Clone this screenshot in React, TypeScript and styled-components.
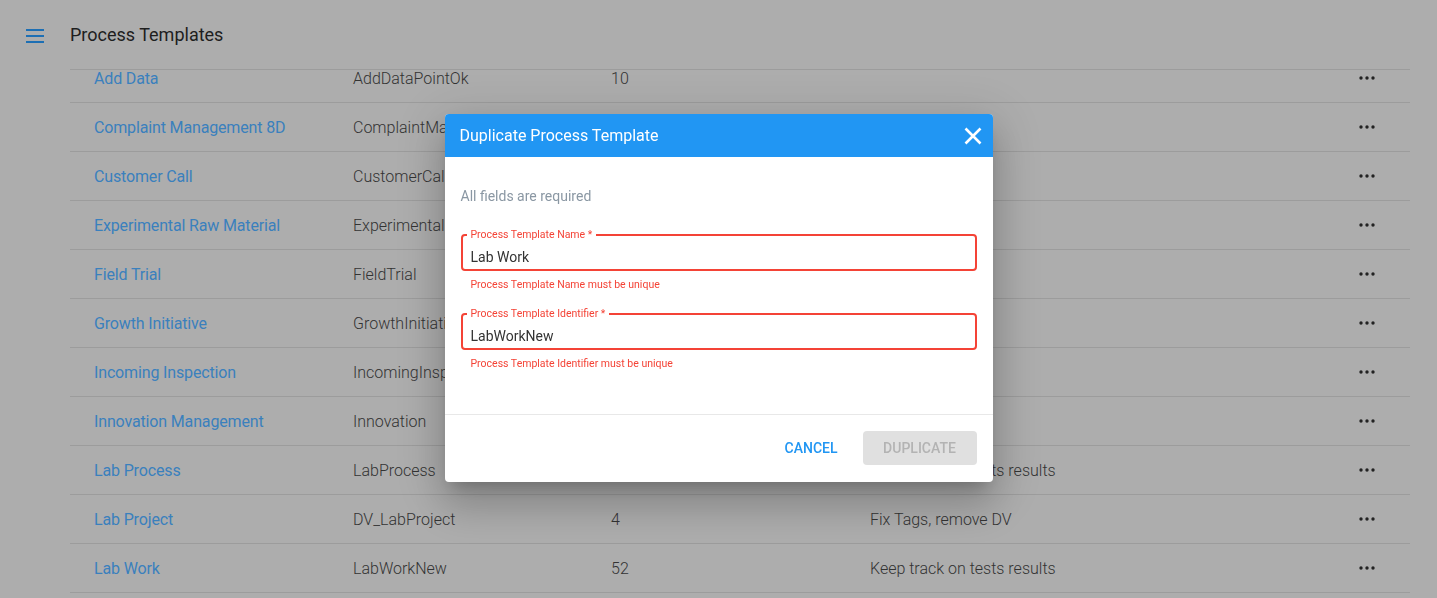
import React from "react";
import styled, { createGlobalStyle } from "styled-components";

const GlobalStyle = createGlobalStyle`
  html, body { margin: 0; padding: 0; height: 100%; overflow: hidden; }
  body { font-family: Roboto, "Noto Sans", Arial, sans-serif; background: #adadad; }
  * { box-sizing: border-box; }
`;

const Page = styled.div`
  height: 598px;
  display: flex;
  flex-direction: column;
  background: #adadad;
`;

const TopBar = styled.header`
  height: 69px;
  flex: none;
  display: flex;
  align-items: center;
  padding-left: 26px;
  gap: 26px;
`;

const MenuButton = styled.button`
  border: 0;
  background: none;
  padding: 0;
  width: 18px;
  height: 14px;
  display: flex;
  flex-direction: column;
  justify-content: space-between;
  margin-top: 2px;
  span {
    display: block;
    height: 2px;
    background: #1d6fb4;
  }
`;

const Title = styled.h1`
  margin: 0;
  font-size: 18px;
  font-weight: 400;
  color: #1e1e1e;
`;

const TableViewport = styled.div`
  flex: 1;
  margin: 0 27px 0 70px;
  overflow: hidden;
  border-top: 1px solid #9c9c9c;
`;

const Rows = styled.div`
  margin-top: -16px;
`;

const Row = styled.div`
  display: grid;
  grid-template-columns: 259px 258px 259px 1fr 87px;
  padding-left: 24px;
  height: 49px;
  align-items: center;
  border-bottom: 1px solid #9c9c9c;
  font-size: 16px;
  font-weight: 300;
  color: #333;
`;

const NameCell = styled.span`
  color: #3a80bd;
  font-weight: 400;
  letter-spacing: -0.15px;
`;

const Cell = styled.span`
  white-space: nowrap;
`;

const ActionCell = styled.span`
  display: flex;
  justify-content: center;
  svg { display: block; }
`;

const Backdrop = styled.div`
  position: fixed;
  inset: 0;
  display: flex;
  align-items: center;
  justify-content: center;
`;

const Dialog = styled.div`
  width: 548px;
  background: #fff;
  border-radius: 4px;
  overflow: hidden;
  margin-top: -2px;
  box-shadow: 0 11px 15px -7px rgba(0,0,0,0.2), 0 24px 38px 3px rgba(0,0,0,0.14), 0 9px 46px 8px rgba(0,0,0,0.12);
`;

const DialogHeader = styled.div`
  height: 43px;
  background: #2196f3;
  display: flex;
  align-items: center;
  justify-content: space-between;
  padding: 0 10px 0 15px;
`;

const DialogTitle = styled.h2`
  margin: 0;
  font-size: 16px;
  font-weight: 400;
  color: #fff;
`;

const CloseButton = styled.button`
  border: 0;
  background: none;
  padding: 0;
  width: 20px;
  height: 20px;
  display: flex;
  align-items: center;
  justify-content: center;
`;

const DialogBody = styled.div`
  padding: 29px 16px 43px;
`;

const Hint = styled.p`
  margin: 0 0 23px;
  font-size: 14px;
  line-height: 20px;
  color: #8a97a3;
`;

const Field = styled.div`
  & + & { margin-top: 16px; }
`;

const Outline = styled.fieldset`
  margin: 0;
  padding: 6px 8px 2px;
  border: 2px solid #f44336;
  border-radius: 4px;
  min-width: 0;
`;

const Legend = styled.legend`
  font-size: 10.5px;
  line-height: 12px;
  color: #f44336;
  padding: 0 4px;
  margin-left: -4px;
`;

const Value = styled.input`
  display: block;
  width: 100%;
  height: 20px;
  border: 0;
  padding: 0;
  outline: none;
  font-family: inherit;
  font-size: 14px;
  color: #333;
  background: transparent;
`;

const Helper = styled.div`
  margin-top: 7px;
  padding-left: 10px;
  font-size: 10.5px;
  line-height: 14px;
  color: #f44336;
`;

const DialogFooter = styled.div`
  border-top: 1px solid #e8e8e8;
  padding: 16px 16px 17px;
  display: flex;
  justify-content: flex-end;
  gap: 9px;
`;

const Button = styled.button<{ $variant: "text" | "disabled" }>`
  height: 34px;
  border: 0;
  border-radius: 4px;
  padding: 0 16px;
  font-family: inherit;
  font-size: 14px;
  font-weight: 500;
  letter-spacing: 0;
  background: ${(p) => (p.$variant === "disabled" ? "#e0e0e0" : "transparent")};
  color: ${(p) => (p.$variant === "disabled" ? "#b3b3b3" : "#2196f3")};
  width: ${(p) => (p.$variant === "disabled" ? "114px" : "auto")};
`;

const Dots = () => (
  <svg width="16" height="4" viewBox="0 0 16 4">
    <circle cx="2" cy="2" r="1.7" fill="#222" />
    <circle cx="8" cy="2" r="1.7" fill="#222" />
    <circle cx="14" cy="2" r="1.7" fill="#222" />
  </svg>
);

const rows = [
  ["Add Data", "AddDataPointOk", "10", ""],
  ["Complaint Management 8D", "ComplaintManagement8D", "", ""],
  ["Customer Call", "CustomerCall", "", ""],
  ["Experimental Raw Material", "ExperimentalRawMaterial", "", ""],
  ["Field Trial", "FieldTrial", "", ""],
  ["Growth Initiative", "GrowthInitiative", "", ""],
  ["Incoming Inspection", "IncomingInspection", "", ""],
  ["Innovation Management", "Innovation", "", ""],
  ["Lab Process", "LabProcess", "", "Keep track on tests results"],
  ["Lab Project", "DV_LabProject", "4", "Fix Tags, remove DV"],
  ["Lab Work", "LabWorkNew", "52", "Keep track on tests results"],
];

export default function App() {
  return (
    <>
      <GlobalStyle />
      <Page>
        <TopBar>
          <MenuButton aria-label="menu">
            <span />
            <span />
            <span />
          </MenuButton>
          <Title>Process Templates</Title>
        </TopBar>
        <TableViewport>
          <Rows>
            {rows.map(([name, id, count, desc]) => (
              <Row key={name}>
                <NameCell>{name}</NameCell>
                <Cell>{id}</Cell>
                <Cell>{count}</Cell>
                <Cell>{desc}</Cell>
                <ActionCell>
                  <Dots />
                </ActionCell>
              </Row>
            ))}
          </Rows>
        </TableViewport>
      </Page>
      <Backdrop>
        <Dialog>
          <DialogHeader>
            <DialogTitle>Duplicate Process Template</DialogTitle>
            <CloseButton aria-label="close">
              <svg width="18" height="18" viewBox="0 0 18 18">
                <path d="M1.5 1.5 L16.5 16.5 M16.5 1.5 L1.5 16.5" stroke="#fff" strokeWidth="2.6" strokeLinecap="butt" />
              </svg>
            </CloseButton>
          </DialogHeader>
          <DialogBody>
            <Hint>All fields are required</Hint>
            <Field>
              <Outline>
                <Legend>Process Template Name *</Legend>
                <Value defaultValue="Lab Work" />
              </Outline>
              <Helper>Process Template Name must be unique</Helper>
            </Field>
            <Field>
              <Outline>
                <Legend>Process Template Identifier *</Legend>
                <Value defaultValue="LabWorkNew" />
              </Outline>
              <Helper>Process Template Identifier must be unique</Helper>
            </Field>
          </DialogBody>
          <DialogFooter>
            <Button $variant="text">CANCEL</Button>
            <Button $variant="disabled" disabled>DUPLICATE</Button>
          </DialogFooter>
        </Dialog>
      </Backdrop>
    </>
  );
}
